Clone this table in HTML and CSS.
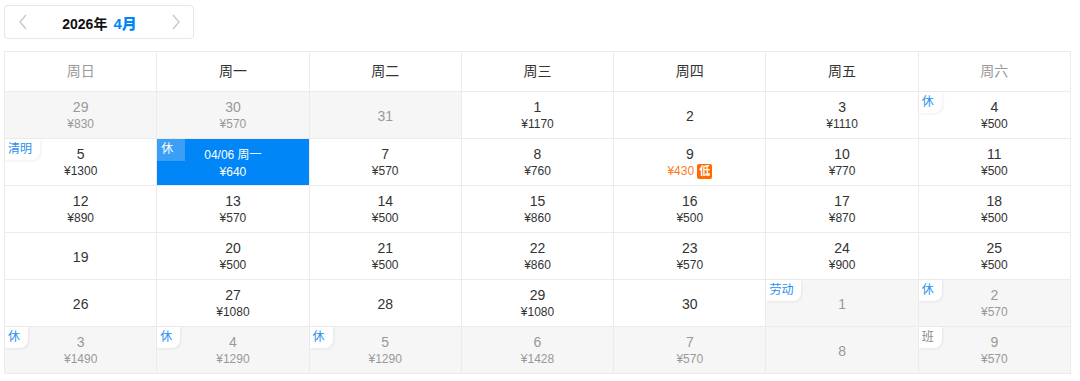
FILE: index.html
```html
<!DOCTYPE html>
<html lang="zh">
<head>
<meta charset="utf-8">
<link rel="stylesheet" href="styles.css">
</head>
<body>
<div class="page">
  <div class="nav">
    <span class="arrow"><svg width="10" height="16" viewBox="0 0 10 16"><path d="M8 1 L2 8 L8 15" fill="none" stroke="#c8c8c8" stroke-width="1.4"/></svg></span>
    <span class="title">2026年<b class="month">4月</b></span>
    <span class="arrow"><svg width="10" height="16" viewBox="0 0 10 16"><path d="M2 1 L8 8 L2 15" fill="none" stroke="#c8c8c8" stroke-width="1.4"/></svg></span>
  </div>
  <div class="cal">
    <div class="hd weekend">周日</div><div class="hd">周一</div><div class="hd">周二</div><div class="hd">周三</div><div class="hd">周四</div><div class="hd">周五</div><div class="hd weekend">周六</div>

    <div class="c off"><span class="d">29</span><span class="p">¥830</span></div>
    <div class="c off"><span class="d">30</span><span class="p">¥570</span></div>
    <div class="c off"><span class="d">31</span></div>
    <div class="c"><span class="d">1</span><span class="p">¥1170</span></div>
    <div class="c"><span class="d">2</span></div>
    <div class="c"><span class="d">3</span><span class="p">¥1110</span></div>
    <div class="c"><i class="tag">休</i><span class="d">4</span><span class="p">¥500</span></div>

    <div class="c"><i class="tag">清明</i><span class="d">5</span><span class="p">¥1300</span></div>
    <div class="c sel"><i class="tag">休</i><span class="d">04/06 周一</span><span class="p">¥640</span></div>
    <div class="c"><span class="d">7</span><span class="p">¥570</span></div>
    <div class="c"><span class="d">8</span><span class="p">¥760</span></div>
    <div class="c"><span class="d">9</span><span class="p low">¥430 <em class="lowtag">低</em></span></div>
    <div class="c"><span class="d">10</span><span class="p">¥770</span></div>
    <div class="c"><span class="d">11</span><span class="p">¥500</span></div>

    <div class="c"><span class="d">12</span><span class="p">¥890</span></div>
    <div class="c"><span class="d">13</span><span class="p">¥570</span></div>
    <div class="c"><span class="d">14</span><span class="p">¥500</span></div>
    <div class="c"><span class="d">15</span><span class="p">¥860</span></div>
    <div class="c"><span class="d">16</span><span class="p">¥500</span></div>
    <div class="c"><span class="d">17</span><span class="p">¥870</span></div>
    <div class="c"><span class="d">18</span><span class="p">¥500</span></div>

    <div class="c"><span class="d">19</span></div>
    <div class="c"><span class="d">20</span><span class="p">¥500</span></div>
    <div class="c"><span class="d">21</span><span class="p">¥500</span></div>
    <div class="c"><span class="d">22</span><span class="p">¥860</span></div>
    <div class="c"><span class="d">23</span><span class="p">¥570</span></div>
    <div class="c"><span class="d">24</span><span class="p">¥900</span></div>
    <div class="c"><span class="d">25</span><span class="p">¥500</span></div>

    <div class="c"><span class="d">26</span></div>
    <div class="c"><span class="d">27</span><span class="p">¥1080</span></div>
    <div class="c"><span class="d">28</span></div>
    <div class="c"><span class="d">29</span><span class="p">¥1080</span></div>
    <div class="c"><span class="d">30</span></div>
    <div class="c off"><i class="tag">劳动</i><span class="d">1</span></div>
    <div class="c off"><i class="tag">休</i><span class="d">2</span><span class="p">¥570</span></div>

    <div class="c off"><i class="tag">休</i><span class="d">3</span><span class="p">¥1490</span></div>
    <div class="c off"><i class="tag">休</i><span class="d">4</span><span class="p">¥1290</span></div>
    <div class="c off"><i class="tag">休</i><span class="d">5</span><span class="p">¥1290</span></div>
    <div class="c off"><span class="d">6</span><span class="p">¥1428</span></div>
    <div class="c off"><span class="d">7</span><span class="p">¥570</span></div>
    <div class="c off"><span class="d">8</span></div>
    <div class="c off"><i class="tag work">班</i><span class="d">9</span><span class="p">¥570</span></div>
  </div>
</div>
</body>
</html>
```

FILE: styles.css
```css
* { box-sizing: border-box; }
html, body { margin: 0; padding: 0; background: #fff; }
body {
  font-family: "Liberation Sans", "Noto Sans CJK SC", sans-serif;
  color: #333;
}
.page {
  padding: 5px 0 0 4px;
  display: flex;
  flex-direction: column;
  gap: 12px;
}
.nav {
  width: 190px;
  height: 34px;
  border: 1px solid #e6e6e6;
  border-radius: 4px;
  display: flex;
  align-items: center;
  justify-content: space-between;
  padding: 0 12px 0 13px;
}
.arrow { display: flex; align-items: center; }
.title {
  font-size: 14px;
  font-weight: bold;
  color: #111;
}
.month { color: #0086f6; margin-left: 6px; font-size: 15px; }
.cal {
  width: 1067px;
  display: grid;
  grid-template-columns: repeat(7, 1fr);
  grid-auto-rows: 47px;
  grid-template-rows: 40px;
  border-top: 1px solid #ebebeb;
  border-left: 1px solid #ebebeb;
}
.hd {
  display: flex;
  align-items: center;
  justify-content: center;
  font-size: 14px;
  color: #333;
  padding-bottom: 3px;
  border-right: 1px solid #ebebeb;
  border-bottom: 1px solid #ebebeb;
}
.hd.weekend { color: #999; }
.c {
  position: relative;
  display: flex;
  flex-direction: column;
  align-items: center;
  justify-content: center;
  padding-top: 2px;
  border-right: 1px solid #ebebeb;
  border-bottom: 1px solid #ebebeb;
  background: #fff;
}
.c.off { background: #f6f6f6; color: #999; }
.c.off .p { color: #999; }
.d { font-size: 14px; line-height: 17px; }
.p { font-size: 12px; line-height: 17px; color: #333; display: flex; align-items: center; }
.p.low { color: #ff7a1a; }
.lowtag {
  font-style: normal;
  background: #ff6a00;
  color: #fff;
  font-size: 11px;
  font-weight: bold;
  line-height: 15px;
  padding: 0 2px;
  border-radius: 2px;
  margin-left: 3px;
}
.tag {
  position: absolute;
  left: 0;
  top: 0;
  font-style: normal;
  font-size: 12px;
  line-height: 14px;
  color: #2b8ff0;
  background: #fff;
  padding: 3px 8px 4px 3px;
  border-bottom-right-radius: 8px;
  box-shadow: 1px 1px 3px rgba(0,0,0,0.07);
}
.tag.work { color: #888; }
.c.sel { background: #0086f6; color: #fff; }
.c.sel .d { font-size: 12px; line-height: 18px; }
.c.sel .p { color: #fff; font-size: 12px; }
.c.sel .tag {
  background: #3b9ff8;
  color: #fff;
  box-shadow: none;
  border-radius: 0;
  padding: 3px 12px 5px 4px;
}
```
